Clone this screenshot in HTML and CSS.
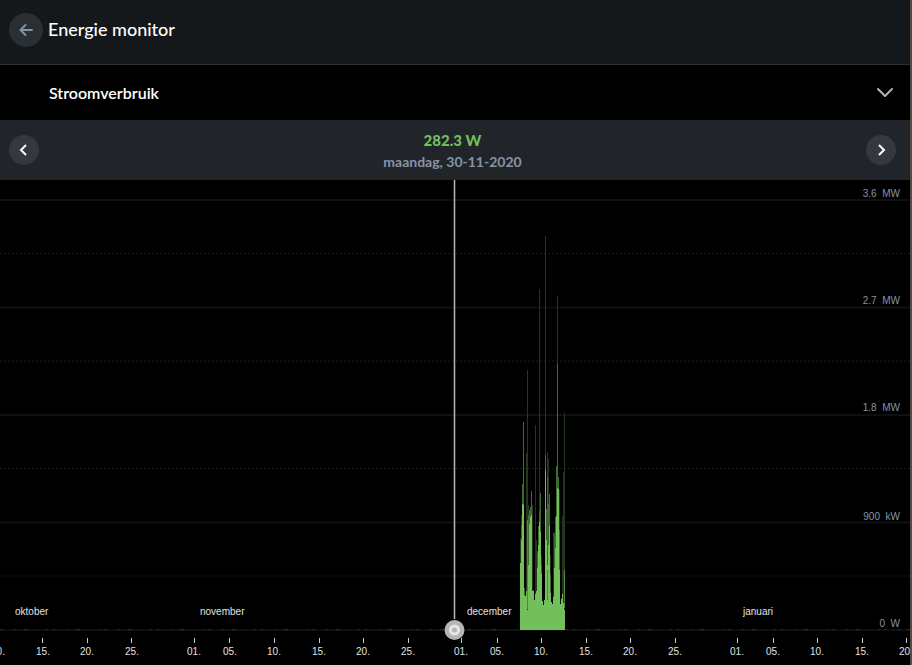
FILE: index.html
```
<!DOCTYPE html>
<html lang="nl">
<head>
<meta charset="utf-8">
<meta name="viewport" content="width=device-width, initial-scale=1">
<title>Energie monitor</title>
<link rel="stylesheet" href="styles.css">
</head>
<body>
<header class="topbar">
  <button class="round back" type="button" aria-label="Terug">
    <svg width="16" height="16" viewBox="0 0 16 16"><path d="M14 8H3M7.500 3L2.500 8L7.500 13"/></svg>
  </button>
  <h1>Energie monitor</h1>
</header>
<main>
  <button class="selector" type="button">
    <span>Stroomverbruik</span>
    <svg width="18" height="12" viewBox="0 0 18 12"><path d="M2 2L9 9L16 2"/></svg>
  </button>
  <section class="period">
    <button class="round step" type="button" aria-label="Vorige">
      <svg width="12" height="14" viewBox="0 0 12 14"><path d="M8 2L3 7L8 12"/></svg>
    </button>
    <div class="reading">
      <strong>282.3 W</strong>
      <time datetime="2020-11-30">maandag, 30-11-2020</time>
    </div>
    <button class="round step" type="button" aria-label="Volgende">
      <svg width="12" height="14" viewBox="0 0 12 14"><path d="M4 2L9 7L4 12"/></svg>
    </button>
  </section>
  <svg class="chart" viewBox="0 0 910 485" role="img" aria-label="Stroomverbruik per dag">
    <path class="grid" d="M0 20H910M0 127.500H910M0 235H910M0 342.500H910M0 450H910"/>
    <path class="grid-minor" d="M0 73.500H910M0 181H910M0 288.500H910M0 396H910"/>
    <path class="trace" d="M0 449.500H910"/>
    <!-- usage columns, from faint peaks to solid base -->
    <path class="peak" d="M520.500 358V450M521.500 335V450M526.500 273V418M527.500 190V450M528.500 325V450M532.500 325V416M535.500 245V450M536.500 360V450M539.500 109V450M541.500 375V450M545.500 56V450M547.500 272V450M548.500 279V450M550.500 375V450M553.500 352V450M557.500 116V450M559.500 310V450M562.500 336V450M563.500 292V450M564.500 233V450"/>
    <path class="mid" d="M521.500 345V450M522.500 304V450M523.500 242V450M524.500 408V450M528.500 335V450M529.500 330V450M530.500 327V450M531.500 311V450M533.500 410V450M537.500 371V450M538.500 346V450M539.500 331V450M540.500 313V450M541.500 385V450M545.500 275V450M546.500 329V450M547.500 297V450M548.500 324V450M549.500 314V450M550.500 395V450M554.500 353V450M555.500 337V450M556.500 286V450M557.500 184V450M558.500 297V450M559.500 350V450"/>
    <path class="base" d="M520 450V383H521V360H522V324H523V325H524V415H525V416H526V411H527V430H528V385H529V344H530V337H531V335H532V411H534V420H535V414H536V411H537V388H538V365H539V342H540V352H541V394H542V421H543V425H544V420H545V290H546V360H547V385H548V365H549V346H550V413H551V422H552V424H553V417H554V388H555V368H556V336H557V308H558V309H559V390H560V424H561V419H562V414H563V423H564V430H565V450Z"/>
    <path class="gap" d="M527.500 340V429M547.500 390V420M564.500 390V428"/>
    <path class="cursor-edge" d="M454.500 0V439"/>
    <path class="cursor" d="M454.500 0V439"/>
    <circle class="knob" cx="454.500" cy="450" r="10"/>
    <circle class="knob-ring" cx="454.500" cy="450" r="4"/>
    <path class="ticks" d="M42.500 458V463M87.500 458V463M131.500 458V463M194.500 458V463M229.500 458V463M274.500 458V463M319.500 458V463M363.500 458V463M408.500 458V463M461.500 458V463M497.500 458V463M541.500 458V463M586.500 458V463M630.500 458V463M675.500 458V463M737.500 458V463M773.500 458V463M817.500 458V463M862.500 458V463M906.500 458V463"/>
    <g class="dates">
      <text x="-2" y="475">10.</text><text x="43" y="475">15.</text><text x="87" y="475">20.</text><text x="132" y="475">25.</text>
      <text x="194" y="475">01.</text><text x="230" y="475">05.</text><text x="274" y="475">10.</text><text x="319" y="475">15.</text><text x="363" y="475">20.</text><text x="408" y="475">25.</text>
      <text x="461" y="475">01.</text><text x="497" y="475">05.</text><text x="541" y="475">10.</text><text x="586" y="475">15.</text><text x="630" y="475">20.</text><text x="675" y="475">25.</text>
      <text x="737" y="475">01.</text><text x="773" y="475">05.</text><text x="817" y="475">10.</text><text x="862" y="475">15.</text><text x="906" y="475">20.</text>
    </g>
    <g class="months">
      <text x="15" y="435">oktober</text><text x="200" y="435">november</text><text x="467" y="435">december</text><text x="743" y="435">januari</text>
    </g>
    <g class="scale">
      <text x="900" y="17">3.6&#160; MW</text><text x="900" y="124">2.7&#160; MW</text><text x="900" y="231">1.8&#160; MW</text><text x="900" y="340">900&#160; kW</text><text x="900" y="447">0&#160; W</text>
    </g>
  </svg>
</main>
</body>
</html>
```
FILE: styles.css
```
* { box-sizing: border-box; }
body {
  margin: 0;
  min-height: 100vh;
  border-right: 2px solid #544c45;
  background: #000;
  color: #fff;
  font-family: Lato, "Liberation Sans", sans-serif;
}
button {
  border: 0;
  padding: 0;
  color: inherit;
  font: inherit;
}
button svg {
  fill: none;
  stroke: currentColor;
  stroke-width: 2;
  stroke-linecap: round;
  stroke-linejoin: round;
}
.topbar {
  display: flex;
  align-items: flex-start;
  gap: 5px;
  height: 65px;
  padding: 13px 9px;
  background: #14181b;
  border-bottom: 1px solid #2b3037;
}
.round {
  display: grid;
  place-items: center;
  flex: none;
  border-radius: 50%;
}
.back {
  width: 34px;
  height: 34px;
  background: #2a2f34;
  color: #8292a8;
}
h1 {
  margin: 0;
  font-size: 18px;
  font-weight: 500;
  line-height: 32px;
}
.selector {
  display: flex;
  align-items: center;
  justify-content: space-between;
  width: 100%;
  height: 55px;
  padding: 0 16px 0 49px;
  background: #000;
  font-size: 16px;
  font-weight: 600;
}
.selector svg { stroke: #b4b4b4; }
.period {
  display: flex;
  align-items: center;
  justify-content: space-between;
  height: 60px;
  padding: 0 14px 0 9px;
  background: #212429;
}
.step {
  width: 30px;
  height: 30px;
  background: #343840;
}
.step svg {
  stroke-linecap: butt;
  stroke-linejoin: miter;
}
.reading {
  display: flex;
  flex-direction: column;
  align-items: center;
  padding-top: 2px;
  line-height: 22px;
  font-weight: 700;
}
.reading strong {
  color: #73bf5b;
  font-size: 15px;
}
.reading time {
  color: #8594a7;
  font-size: 14px;
}
.chart {
  display: block;
  width: 100%;
  height: auto;
  fill: none;
}
.grid { stroke: #0f0f0f; stroke-width: 2; }
.grid-minor { stroke: #1b1b1b; stroke-dasharray: 2 2; }
.trace { stroke: #233020; stroke-dasharray: 3 11 2 7 5 18 2 4; }
.peak { stroke: #22371c; }
.mid { stroke: #3f6a32; }
.base { fill: #73bf5b; }
.gap { stroke: #51873f; }
.cursor { stroke: #b8b8b8; }
.cursor-edge { stroke: #606060; stroke-width: 2; }
.knob { fill: #b5b5b5; }
.knob-ring { fill: #b5b5b5; stroke: #e6e6e6; stroke-width: 3; }
.ticks { stroke: #ccc; }
.chart text {
  font-family: "Liberation Sans", Arial, sans-serif;
  font-size: 10px;
}
.dates { fill: #e2e2e2; text-anchor: middle; }
.months { fill: #e2e2e2; }
.scale { fill: #8594a7; text-anchor: end; }
```
